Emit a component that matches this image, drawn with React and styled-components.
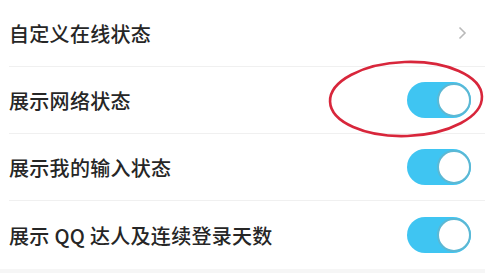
import React from 'react';
import styled, { createGlobalStyle } from 'styled-components';

const GlobalStyle = createGlobalStyle`
  html, body {
    margin: 0;
    padding: 0;
    background: #ffffff;
  }
  body {
    font-family: "Noto Sans CJK SC", "Noto Sans", sans-serif;
  }
`;

const Page = styled.div`
  position: relative;
  width: 485px;
  height: 273px;
  overflow: hidden;
  background: #f6f6f6;
`;

const List = styled.ul`
  list-style: none;
  margin: 0;
  padding: 0 0 0 9px;
  background: #ffffff;
`;

const Row = styled.li`
  display: flex;
  align-items: center;
  justify-content: space-between;
  padding-right: 14px;
  border-bottom: ${(p) => (p.last ? 'none' : '1px solid #f0f0f0')};
  height: ${(p) => (p.last ? '68px' : '66px')};
`;

const Label = styled.span`
  font-size: 20px;
  font-weight: 500;
  color: #262626;
  letter-spacing: 0.3px;
  line-height: 1;
  margin-top: 2px;
`;

const Track = styled.div`
  display: flex;
  align-items: center;
  justify-content: flex-end;
  width: 64px;
  height: 36px;
  border-radius: 18px;
  background: #3fc5f2;
  box-sizing: border-box;
`;

const Knob = styled.div`
  width: 34px;
  height: 34px;
  border-radius: 50%;
  background: #ffffff;
  border: 2px solid #5cb8d4;
  box-sizing: border-box;
`;

const Chevron = styled.svg`
  width: 9px;
  height: 14px;
  margin-right: 4px;
`;

const Annotation = styled.svg`
  position: absolute;
  left: 326px;
  top: 58px;
  width: 159px;
  height: 82px;
  pointer-events: none;
`;

const Toggle = () => (
  <Track>
    <Knob />
  </Track>
);

const rows = [
  { label: '自定义在线状态', kind: 'link' },
  { label: '展示网络状态', kind: 'toggle' },
  { label: '展示我的输入状态', kind: 'toggle' },
  { label: '展示 QQ 达人及连续登录天数', kind: 'toggle' },
];

export default function App() {
  return (
    <>
      <GlobalStyle />
      <Page>
        <List>
          {rows.map((r, i) => (
            <Row key={r.label} last={i === rows.length - 1}>
              <Label>{r.label}</Label>
              {r.kind === 'link' ? (
                <Chevron viewBox="0 0 9 14">
                  <path d="M1.5 1.5 L7 7 L1.5 12.5" fill="none" stroke="#b9b9b9" strokeWidth="1.6" />
                </Chevron>
              ) : (
                <Toggle />
              )}
            </Row>
          ))}
        </List>
        <Annotation viewBox="0 0 159 82">
          <ellipse cx="80" cy="41" rx="76" ry="37" fill="none" stroke="#d8263b" strokeWidth="2.6" transform="rotate(-2 80 41)" />
        </Annotation>
      </Page>
    </>
  );
}
